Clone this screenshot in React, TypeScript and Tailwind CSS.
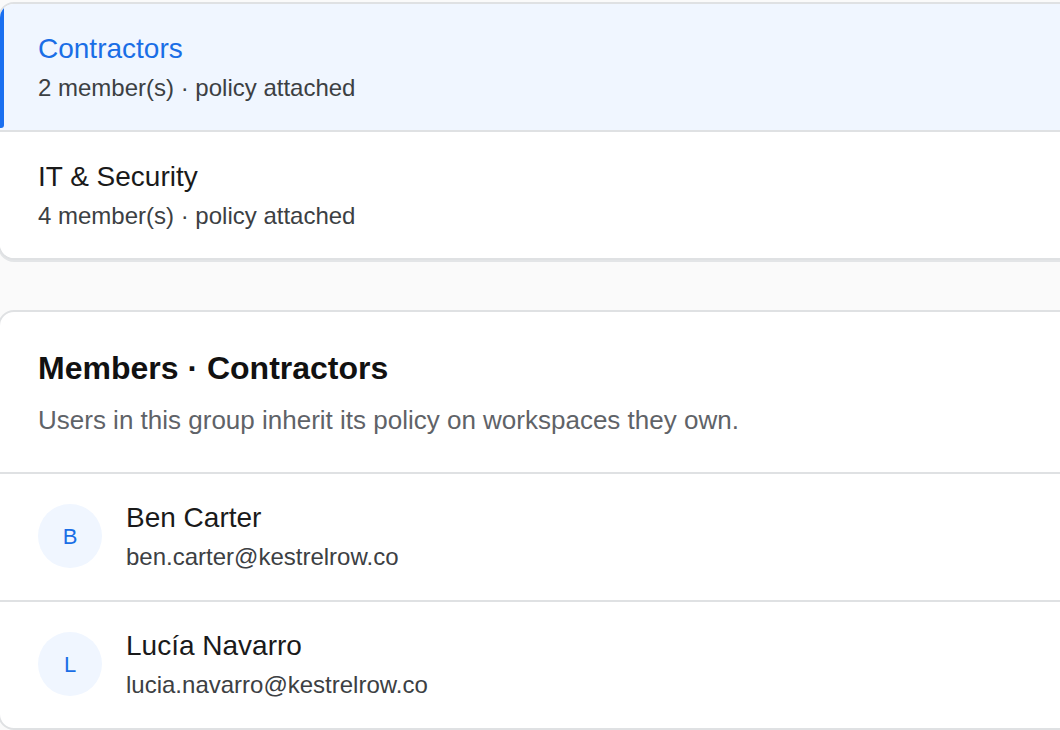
import React from 'react';

type Group = {
    name: string;
    members: number;
    selected?: boolean;
};

type Member = {
    name: string;
    email: string;
};

const groups: Group[] = [
    {name: "Contractors", members: 2, selected: true},
    {name: "IT & Security", members: 4},
];

const members: Member[] = [
    {name: "Ben Carter", email: "ben.carter@kestrelrow.co"},
    {name: "Lucía Navarro", email: "lucia.navarro@kestrelrow.co"},
];

const App = () => {
    return (
        <div
            className="min-h-[730px] w-[1060px] overflow-hidden bg-[#fafafa] pt-[2px]"
            style={{fontFamily: '"Liberation Sans", Arial, sans-serif'}}
        >
            {/* group list */}
            <div className="-ml-[2px] w-[1100px] overflow-hidden rounded-2xl border-2 border-[#dfe1e3] bg-white shadow-[0_2px_0_#e3e5e7]">
                {groups.map((group, index) => (
                    <div
                        key={group.name}
                        className={`relative py-6 pl-[38px] ${index > 0 ? "border-t-2 border-[#dfe1e3]" : ""} ${group.selected ? "bg-[#f0f6ff]" : "bg-white"}`}
                    >
                        {group.selected ? (
                            <div className="absolute left-0 top-[1px] bottom-[2px] w-1 rounded-r-[3px] bg-[#1a6ff0]" />
                        ) : null}
                        <p className={`text-[28px] leading-[42px] ${group.selected ? "text-[#1a6ee6]" : "text-[#1a1a1a]"}`}>
                            {group.name}
                        </p>
                        <p className="text-[24px] leading-[36px] text-[#3c4043]">
                            {group.members} member(s) · policy attached
                        </p>
                    </div>
                ))}
            </div>

            {/* members of selected group */}
            <div className="-ml-[2px] mt-[50px] w-[1100px] overflow-hidden rounded-2xl border-2 border-[#dfe1e3] bg-white">
                <div className="pl-[38px] pt-8 pb-[33px]">
                    <h2 className="text-[32px] font-bold leading-[49px] text-[#111111]">Members · Contractors</h2>
                    <p className="mt-2 text-[26px] leading-[38px] text-[#5f6368]">
                        Users in this group inherit its policy on workspaces they own.
                    </p>
                </div>
                {members.map((member) => (
                    <div key={member.email} className="flex items-center gap-6 border-t-2 border-[#dfe1e3] pt-[23px] pb-[25px] pl-[38px]">
                        <div className="flex h-16 w-16 shrink-0 items-center justify-center rounded-full bg-[#f0f6ff] text-[22px] text-[#1a6ee6]">
                            {member.name.charAt(0)}
                        </div>
                        <div className="flex flex-col">
                            <p className="text-[28px] leading-[42px] text-[#1a1a1a]">{member.name}</p>
                            <p className="text-[24px] leading-[36px] text-[#3c4043]">{member.email}</p>
                        </div>
                    </div>
                ))}
            </div>
        </div>
    );
};

export default App;
